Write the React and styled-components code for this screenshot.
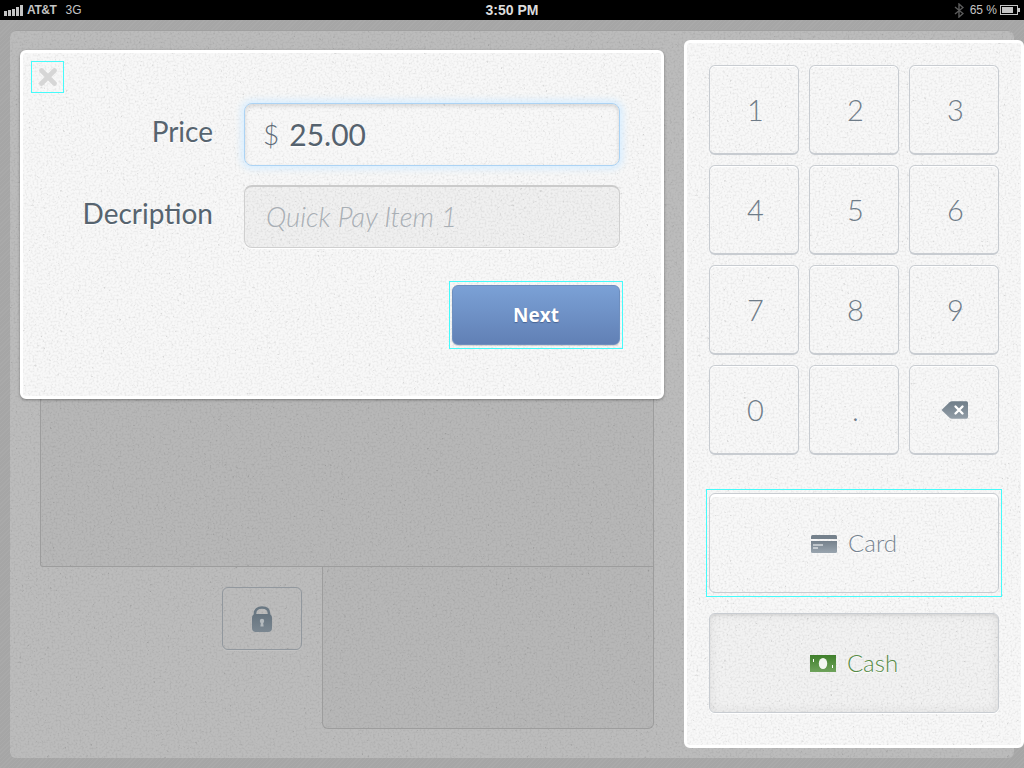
import React from "react";
import styled, { createGlobalStyle } from "styled-components";

const svgNoise = (freq, slope, offset, seed, size = 320) =>
  `url("data:image/svg+xml,${encodeURIComponent(
    `<svg xmlns='http://www.w3.org/2000/svg' width='${size}' height='${size}'><filter id='n' x='0' y='0' width='100%' height='100%'><feTurbulence type='fractalNoise' baseFrequency='${freq}' numOctaves='3' seed='${seed}' stitchTiles='stitch'/><feColorMatrix values='0 0 0 0 0  0 0 0 0 0  0 0 0 0 0  0 0 0 ${slope} ${offset}'/></filter><rect width='100%' height='100%' filter='url(#n)'/></svg>`
  )}")`;

const fine = svgNoise(0.5, 0.16, -0.068, 7);
const specks = svgNoise(0.35, 0.6, -0.43, 23, 480);
const paper = `${specks}, ${fine}`;

const GlobalStyle = createGlobalStyle`
  html, body { margin: 0; padding: 0; height: 768px; overflow: hidden; background: #a6a6a6; }
  * { box-sizing: border-box; }
`;

const Page = styled.div`
  width: 1024px;
  height: 768px;
  display: flex;
  flex-direction: column;
  font-family: Lato, "Open Sans", sans-serif;
`;

const StatusBar = styled.header`
  height: 20px;
  flex: none;
  background: #000;
  display: grid;
  grid-template-columns: 1fr auto 1fr;
  align-items: center;
  padding: 0 4px;
  color: #c4c4c4;
  font: bold 12px "Liberation Sans", Arial, sans-serif;
`;

const StatusLeft = styled.div`
  display: flex;
  align-items: center;
  gap: 3px;
`;

const Carrier = styled.span`
  letter-spacing: -0.4px;
  margin-right: 6px;
`;

const Network = styled.span`
  font-weight: normal;
`;

const Clock = styled.time`
  font-size: 14px;
  color: #dcdcdc;
`;

const StatusRight = styled.div`
  display: flex;
  align-items: center;
  justify-content: flex-end;
  gap: 3px;
  font-weight: normal;
`;

const BatteryText = styled.span`
  margin-left: 3px;
  font-weight: normal;
`;

const Stage = styled.main`
  flex: 1;
  padding: 10px;
  background: repeating-linear-gradient(135deg, #aaaaaa 0 1px, #a6a6a6 1px 3px);
`;

const Desk = styled.div`
  position: relative;
  height: 728px;
  padding: 10px 0;
  display: flex;
  justify-content: space-between;
  border-radius: 6px;
  background: ${paper}, #bcbcbc;
  box-shadow: inset 0 1px 0 #a0a0a0;
`;

const Register = styled.section`
  width: 644px;
  padding-left: 30px;
  display: flex;
  flex-direction: column;
`;

const CartArea = styled.div`
  height: 507px;
  margin-top: 20px;
  border: solid #9d9d9d;
  border-width: 0 1px 1px 1px;
  border-radius: 0 0 0 3px;
  background: rgba(0, 0, 0, 0.025);
`;

const LowerRow = styled.div`
  display: flex;
  height: 162px;
`;

const LockCell = styled.div`
  width: 282px;
  padding: 20px 20px 0 0;
  display: flex;
  justify-content: flex-end;
  align-items: flex-start;
`;

const LockButton = styled.button`
  width: 80px;
  height: 63px;
  padding: 0;
  display: flex;
  align-items: center;
  justify-content: center;
  border: 1px solid #92989e;
  border-radius: 6px;
  background: transparent;
  box-shadow: 0 1px 0 #c2c2c2;
`;

const ReceiptArea = styled.div`
  flex: 1;
  border: solid #9d9d9d;
  border-width: 0 1px 1px 1px;
  border-radius: 0 0 6px 6px;
  background: rgba(0, 0, 0, 0.025);
`;

const Keypad = styled.aside`
  width: 340px;
  height: 708px;
  margin-right: -10px;
  padding: 22px 22px 0;
  border: 3px solid #fff;
  border-radius: 6px;
  background: ${paper}, #f8f8f8;
`;

const KeyGrid = styled.div`
  display: grid;
  grid-template-columns: repeat(3, 90px);
  grid-auto-rows: 90px;
  gap: 10px;
`;

const Key = styled.button`
  padding: ${(p) => (p.$icon ? "0" : "0 0 0 3px")};
  display: flex;
  align-items: center;
  justify-content: center;
  border: 1px solid #c8ccd1;
  border-bottom-width: 2px;
  border-radius: 6px;
  background: transparent;
  box-shadow: inset 0 1px 0 #fff;
  font: 300 29px Lato, sans-serif;
  color: #6f7c88;
`;

const HotSpot = styled.div`
  border: 1px solid #45fbfb;
  padding: 3px 2px;
`;

const CardSpot = styled(HotSpot)`
  margin: 34px -3px 0;
  height: 108px;
`;

const PayButton = styled.button`
  width: 100%;
  height: ${(p) => (p.$cash ? "100px" : "100%")};
  margin-top: ${(p) => (p.$cash ? "16px" : "0")};
  padding: 0;
  display: flex;
  align-items: center;
  justify-content: center;
  gap: 11px;
  border: 1px solid #c8ccd1;
  border-radius: 6px;
  background: ${(p) => (p.$cash ? "rgba(0,0,0,.025)" : "transparent")};
  box-shadow: ${(p) =>
    p.$cash
      ? "inset 0 0 12px rgba(0,0,0,.08), inset 0 2px 2px rgba(0,0,0,.06), 0 1px 0 #fff"
      : "inset 0 3px 0 #fff"};
  font: 300 24px Lato, sans-serif;
  color: ${(p) => (p.$cash ? "#568a45" : "#76838f")};
  text-shadow: 0 1px 0 #fff;

  svg {
    margin-top: 2px;
  }
`;

const PayLabel = styled.span`
  margin-bottom: 2px;
`;

const Modal = styled.section`
  position: absolute;
  left: 10px;
  top: 20px;
  width: 644px;
  height: 349px;
  padding: 8px 41px 0 8px;
  border: 3px solid #fff;
  border-radius: 6px;
  background: ${paper}, #f8f8f8;
  box-shadow: 0 1px 3px rgba(0, 0, 0, 0.35);
`;

const CloseSpot = styled.button`
  display: flex;
  align-items: center;
  justify-content: center;
  width: 33px;
  height: 32px;
  padding: 0;
  border: 1px solid #45fbfb;
  background: transparent;
`;

const Form = styled.div`
  margin-top: 10px;
  display: flex;
  flex-direction: column;
  gap: 19px;
`;

const Row = styled.div`
  display: grid;
  grid-template-columns: 182px 376px;
  column-gap: 31px;
  align-items: center;
`;

const Label = styled.label`
  text-align: right;
  font-size: 28px;
  color: #57646f;
  text-shadow: 0 1px 0 #fff;
  padding-bottom: 8px;
`;

const PriceField = styled.div`
  height: 63px;
  padding: 0 0 2px 18px;
  display: flex;
  align-items: center;
  gap: 10px;
  border: 1px solid #acd3f4;
  border-radius: 8px;
  background: rgba(255, 255, 255, 0.1);
  box-shadow: 0 0 7px 3px #d9eeff, inset 0 2px 4px rgba(0, 0, 0, 0.14);
`;

const Currency = styled.span`
  font-size: 28px;
  font-weight: 300;
  color: #5d6a76;
`;

const Amount = styled.span`
  font-size: 30px;
  color: #55626e;
  text-shadow: 0 1px 0 #fff;
`;

const DescField = styled.div`
  height: 63px;
  padding: 0 0 2px 21px;
  display: flex;
  align-items: center;
  border: 1px solid #cfcfcf;
  border-top: 2px solid #cbcbcb;
  border-radius: 8px;
  background: rgba(0, 0, 0, 0.03);
  box-shadow: 0 1px 0 #fff;
`;

const Placeholder = styled.span`
  font-size: 27.5px;
  font-style: italic;
  font-weight: 300;
  color: #a9afb5;
`;

const Footer = styled.div`
  margin: 33px -3px 0 0;
  display: flex;
  justify-content: flex-end;
`;

const NextSpot = styled(HotSpot)`
  width: 174px;
  height: 68px;
`;

const NextButton = styled.button`
  width: 100%;
  height: 100%;
  padding: 0;
  border: 1px solid #6f8fbf;
  border-radius: 6px;
  background: linear-gradient(#7ba1d6, #6180b5);
  box-shadow: 0 1px 1px rgba(0, 0, 0, 0.15);
  font: bold 19px "Open Sans", Lato, sans-serif;
  color: #fff;
  text-shadow: 0 1px 1px rgba(40, 60, 100, 0.5);
`;

const SignalIcon = () => (
  <svg width="20" height="11" viewBox="0 0 20 11" fill="#c4c4c4" aria-hidden="true">
    <rect x="0" y="6" width="3" height="5" />
    <rect x="4" y="5" width="3" height="6" />
    <rect x="8" y="4" width="3" height="7" />
    <rect x="12" y="2" width="3" height="9" />
    <rect x="16" y="0" width="3" height="11" />
  </svg>
);

const BluetoothIcon = () => (
  <svg width="10" height="15" viewBox="0 0 10 15" fill="none" stroke="#5c5c5c" strokeWidth="1.4" aria-hidden="true">
    <path d="M1 4l8 6.5L5 14V1l4 3.5L1 11" />
  </svg>
);

const BatteryIcon = () => (
  <svg width="20" height="10" viewBox="0 0 20 10" aria-hidden="true">
    <rect x="0.5" y="0.5" width="17" height="9" fill="none" stroke="#c4c4c4" />
    <rect x="2" y="2" width="11" height="6" fill="#c4c4c4" />
    <rect x="18" y="3" width="2" height="4" fill="#c4c4c4" />
  </svg>
);

const CloseIcon = () => (
  <svg width="18" height="18" viewBox="0 0 18 18" aria-hidden="true">
    <path d="M2.5 2.5l13 13M15.5 2.5l-13 13" stroke="#d6d6d6" strokeWidth="4.6" strokeLinecap="round" />
  </svg>
);

const BackspaceIcon = () => (
  <svg width="27" height="18" viewBox="0 0 27 18" aria-hidden="true">
    <defs>
      <linearGradient id="bs" x1="0" y1="0" x2="0" y2="1">
        <stop offset="0" stopColor="#6f7d88" />
        <stop offset="1" stopColor="#929da7" />
      </linearGradient>
    </defs>
    <path d="M0.5 9L8.5 1.2Q9.5 0.3 11 0.3H25.5Q27 0.3 27 2V16Q27 17.7 25.5 17.7H11Q9.5 17.7 8.5 16.8Z" fill="url(#bs)" />
    <path d="M14.5 5.5l7 7M21.5 5.5l-7 7" stroke="#fff" strokeWidth="2.4" strokeLinecap="round" />
  </svg>
);

const CardIcon = () => (
  <svg width="26" height="18" viewBox="0 0 26 18" aria-hidden="true">
    <defs>
      <linearGradient id="cd" x1="0" y1="0" x2="0" y2="1">
        <stop offset="0" stopColor="#75818c" />
        <stop offset="1" stopColor="#9aa5af" />
      </linearGradient>
    </defs>
    <path d="M0 4V1.5Q0 0 1.5 0H24.5Q26 0 26 1.5V4Z" fill="#75818c" />
    <path d="M0 6H26V16.5Q26 18 24.5 18H1.5Q0 18 0 16.5Z" fill="url(#cd)" />
    <path d="M2 10H12M2 13H7" stroke="#fff" strokeWidth="1" />
  </svg>
);

const CashIcon = () => (
  <svg width="26" height="18" viewBox="0 0 26 18" aria-hidden="true">
    <defs>
      <linearGradient id="ch" x1="0" y1="0" x2="0" y2="1">
        <stop offset="0" stopColor="#3f7f2b" />
        <stop offset="1" stopColor="#6fa35c" />
      </linearGradient>
    </defs>
    <rect width="26" height="17" fill="url(#ch)" />
    <ellipse cx="13" cy="8.5" rx="4.2" ry="5.6" fill="#fff" fillOpacity="0.92" />
    <rect x="3" y="4" width="1" height="3" fill="#fff" />
    <rect x="22" y="10" width="1" height="3" fill="#fff" />
  </svg>
);

const LockIcon = () => (
  <svg width="22" height="26" viewBox="0 0 22 26" aria-hidden="true">
    <defs>
      <linearGradient id="lk" x1="0" y1="0" x2="0" y2="1">
        <stop offset="0" stopColor="#66747f" />
        <stop offset="1" stopColor="#7b8791" />
      </linearGradient>
    </defs>
    <path d="M4 10V7.5C4 3.5 7 1.5 11 1.5S18 3.5 18 7.5V10" fill="none" stroke="#6a7883" strokeWidth="2.6" />
    <rect x="1" y="8" width="20" height="18" rx="4" fill="url(#lk)" />
    <circle cx="11" cy="15" r="2.2" fill="#b3b9bd" />
    <path d="M10 15.5h2l.6 5h-3.2z" fill="#b3b9bd" />
  </svg>
);

const keys = ["1", "2", "3", "4", "5", "6", "7", "8", "9", "0", "."];

export default function App() {
  return (
    <Page>
      <GlobalStyle />
      <StatusBar>
        <StatusLeft>
          <SignalIcon />
          <Carrier>AT&amp;T</Carrier>
          <Network>3G</Network>
        </StatusLeft>
        <Clock>3:50 PM</Clock>
        <StatusRight>
          <BluetoothIcon />
          <BatteryText>65 %</BatteryText>
          <BatteryIcon />
        </StatusRight>
      </StatusBar>
      <Stage>
        <Desk>
          <Register>
            <CartArea />
            <LowerRow>
              <LockCell>
                <LockButton aria-label="Lock">
                  <LockIcon />
                </LockButton>
              </LockCell>
              <ReceiptArea />
            </LowerRow>
          </Register>
          <Keypad>
            <KeyGrid>
              {keys.map((k) => (
                <Key key={k}>{k}</Key>
              ))}
              <Key $icon aria-label="Backspace">
                <BackspaceIcon />
              </Key>
            </KeyGrid>
            <CardSpot>
              <PayButton>
                <CardIcon />
                <PayLabel>Card</PayLabel>
              </PayButton>
            </CardSpot>
            <PayButton $cash>
              <CashIcon />
              <PayLabel>Cash</PayLabel>
            </PayButton>
          </Keypad>
          <Modal>
            <CloseSpot aria-label="Close">
              <CloseIcon />
            </CloseSpot>
            <Form>
              <Row>
                <Label>Price</Label>
                <PriceField>
                  <Currency>$</Currency>
                  <Amount>25.00</Amount>
                </PriceField>
              </Row>
              <Row>
                <Label>Decription</Label>
                <DescField>
                  <Placeholder>Quick Pay Item 1</Placeholder>
                </DescField>
              </Row>
            </Form>
            <Footer>
              <NextSpot>
                <NextButton>Next</NextButton>
              </NextSpot>
            </Footer>
          </Modal>
        </Desk>
      </Stage>
    </Page>
  );
}
